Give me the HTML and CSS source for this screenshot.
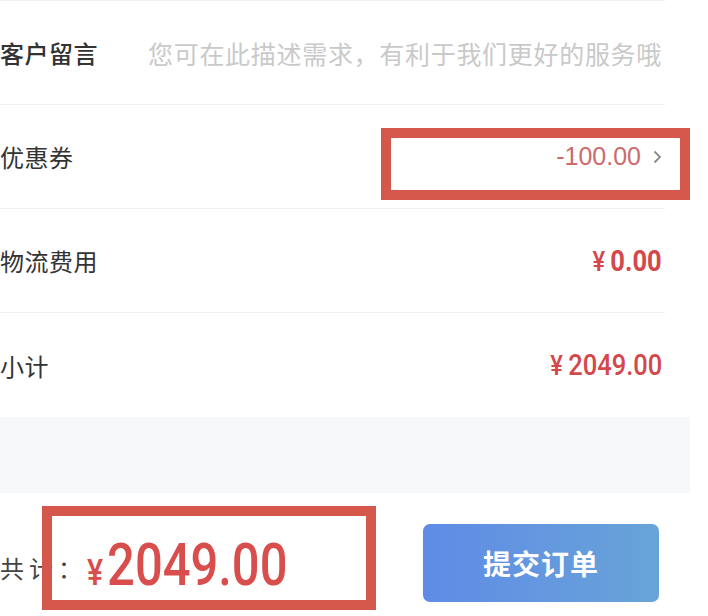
FILE: index.html
```html
<!doctype html>
<html lang="zh-CN">
<head>
  <meta charset="UTF-8">
  <title>确认订单</title>
  <link rel="stylesheet" href="styles.css">
</head>
<body>
  <div class="page">
    <ul class="list">
      <li class="row">
        <span class="label strong">客户留言</span>
        <span class="hint">您可在此描述需求，有利于我们更好的服务哦</span>
      </li>
      <li class="row">
        <span class="label">优惠券</span>
        <span class="coupon">-100.00
          <svg class="arrow" width="9" height="14" viewBox="0 0 9 14"><path d="M1.5 1.5 L7 7 L1.5 12.5" fill="none" stroke="#8a8a8a" stroke-width="1.8"/></svg>
        </span>
      </li>
      <li class="row">
        <span class="label">物流费用</span>
        <span class="price bold">¥<b>0.00</b></span>
      </li>
      <li class="row last">
        <span class="label">小计</span>
        <span class="price">¥<b>2049.00</b></span>
      </li>
    </ul>

    <div class="gap"></div>

    <div class="bar">
      <div class="total">
        <span class="total-label">共计：</span>
        <span class="total-amount"><span class="total-yen">¥</span>2049.00</span>
      </div>
      <button class="submit">提交订单</button>
    </div>

    <!-- 标注框 -->
    <div class="mark mark-coupon"></div>
    <div class="mark mark-total"></div>
  </div>
</body>
</html>
```

FILE: styles.css
```css
*{margin:0;
  padding:0;
  list-style:none;
  box-sizing:border-box;}
body{background:#fff;
     font-family:"Noto Sans CJK SC","Liberation Sans",sans-serif;
     color:#333;}
.page{width:690px;
      position:relative;}

.list{border-top:1px solid #f2f2f2;
      margin-right:25px;}
.row{height:104px;
     border-bottom:1px solid #f0f0f0;
     display:flex;
     align-items:center;
     justify-content:space-between;
     padding-right:3px;}
.row.last{border-bottom:none;}
.label{font-size:24px;
       letter-spacing:0.5px;
       color:#333;}
.label.strong{font-weight:500;}
.hint{font-size:25px;
      letter-spacing:0.7px;
      color:#c9c9c9;}

.coupon{display:flex;
        align-items:center;
        gap:12px;
        font-family:"Liberation Sans",sans-serif;
        font-size:25px;
        color:#cc6b6d;}
.arrow{display:block;}

/* 数字字体偏窄，横向压缩一点 */
.price{display:inline-block;
       font-family:Roboto,"Liberation Sans",sans-serif;
       font-size:27px;
       font-weight:500;
       color:#d2484b;
       transform:scaleX(0.88);
       transform-origin:right center;}
.price b{font-size:29px;
         font-weight:500;
         margin-left:6px;}
.price.bold b{font-weight:700;}

.gap{height:76px;
     background:#f7f8fa;}

.bar{height:124px;
     display:flex;
     justify-content:space-between;
     padding:31px 31px 0 0;}
.total{height:78px;
       display:flex;
       align-items:center;}
.total-label{font-size:24px;
             letter-spacing:5px;
             color:#444;
             margin-top:8px;}
.total-amount{display:inline-block;
              font-family:Roboto,"Liberation Sans",sans-serif;
              font-size:60px;
              font-weight:500;
              color:#d84e4c;
              margin-left:0;
              margin-top:2px;
              transform:scaleX(0.815);
              transform-origin:left center;}
.total-yen{font-size:37px;
           margin-right:5px;}
.submit{width:236px;
        height:78px;
        border:none;
        border-radius:7px;
        background:linear-gradient(90deg,#5f8be6,#68a4d8);
        color:#fff;
        font-family:"Noto Sans CJK SC",sans-serif;
        font-size:28px;
        font-weight:bold;
        letter-spacing:1px;}

.mark{position:absolute;
      border:10px solid #d5564b;}
.mark-coupon{left:381px;
             top:128px;
             width:309px;
             height:72px;}
.mark-total{left:42px;
            top:506px;
            width:334px;
            height:104px;}
```
